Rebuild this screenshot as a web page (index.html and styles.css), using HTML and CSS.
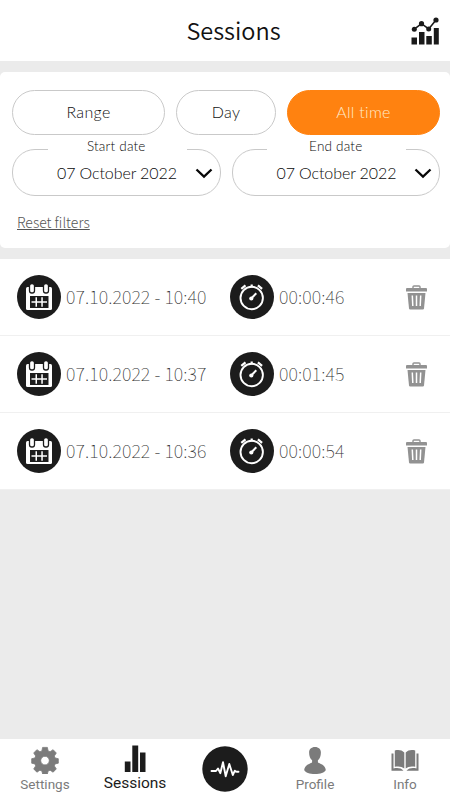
FILE: index.html
```html
<!DOCTYPE html>
<html lang="en">
<head>
<meta charset="utf-8">
<title>Sessions</title>
<link rel="stylesheet" href="styles.css">
</head>
<body>
<svg class="defs" aria-hidden="true">
  <symbol id="calendar" viewBox="0 0 44 44">
    <circle cx="22" cy="22" r="22" fill="#1c1c1c"/>
    <path d="M10.5 12h23a1.5 1.5 0 0 1 1.5 1.5v20a1.5 1.5 0 0 1-1.5 1.5h-23A1.5 1.5 0 0 1 9 33.500v-20a1.500 1.500 0 0 1 1.500-1.500z" fill="#fff"/>
    <path d="M13 21h18.500v12H13z" fill="#1c1c1c"/>
    <path d="M14.500 22.800h3.700v3.200h-3.700zM20.300 22.800H24V26h-3.700zM26.100 22.800h3.700V26h-3.700zM14.500 28h3.700v3.200h-3.700zM20.300 28H24v3.200h-3.700zM26.100 28h3.700v3.200h-3.700z" fill="#1c1c1c"/>
    <path d="M14.500 27H30M19.250 22.300v9.400M25.050 22.300v9.400" stroke="#fff" stroke-width="1.500"/>
    <rect x="12.500" y="8.500" width="5" height="9.500" rx="2.300" fill="#fff" stroke="#1c1c1c" stroke-width="1.300"/>
    <rect x="26.500" y="8.500" width="5" height="9.500" rx="2.300" fill="#fff" stroke="#1c1c1c" stroke-width="1.300"/>
  </symbol>
  <symbol id="timer" viewBox="0 0 44 44">
    <circle cx="22" cy="22" r="22" fill="#1c1c1c"/>
    <g fill="none" stroke="#fff">
      <circle cx="21.700" cy="23" r="11.200" stroke-width="1.900"/>
      <path d="M21.700 9.500v3M11.300 13.800l4.200-3.500M32.100 13.800l-4.200-3.500" stroke-width="2.200"/>
      <path d="M21.500 23.200l4.800-5" stroke-width="2"/>
    </g>
    <circle cx="21.300" cy="23.500" r="2.100" fill="#fff"/>
  </symbol>
  <symbol id="trash" viewBox="0 0 22 25">
    <path d="M7.500 3.500V1.800Q7.500 1 8.500 1h5q1 0 1 .8v1.700" fill="none" stroke="#929292" stroke-width="1.400"/>
    <path d="M1.500 3h19q1 0 1 1v2.500H.500V4q0-1 1-1z" fill="#929292"/>
    <path d="M2 8h18l-1.500 15.500q-.1 1-1.200 1H4.700q-1.100 0-1.200-1z" fill="#929292"/>
    <path d="M6.800 10.500l.5 10.500M11 10.500V21M15.200 10.500l-.5 10.500" stroke="#fff" stroke-width="1.500" fill="none"/>
  </symbol>
  <symbol id="chevron" viewBox="0 0 18 11">
    <path d="M1.500 1.500L9 8.700l7.500-7.200" fill="none" stroke="#080808" stroke-width="2.300"/>
  </symbol>
</svg>

<header class="header">
  <h1 class="title">Sessions</h1>
  <svg class="stats" viewBox="0 0 28 28">
    <g fill="#1a1a1a">
      <path d="M.5 20.500H6v7H.500zM8 15h5.500v12.500H8zM15.300 19h5.500v8.500h-5.500zM22.800 11h5v16.500h-5z"/>
      <circle cx="3.300" cy="12.200" r="2.500"/><circle cx="10.500" cy="6.700" r="2.600"/><circle cx="17.700" cy="12" r="2.500"/><circle cx="25" cy="3" r="2.600"/>
    </g>
    <path d="M3.300 12.200l7.200-5.500 7.200 5.300L25 3" fill="none" stroke="#1a1a1a" stroke-width="1.600"/>
  </svg>
</header>

<section class="filters">
  <div class="periods">
    <button class="pill range">Range</button>
    <button class="pill day">Day</button>
    <button class="pill all">All time</button>
  </div>
  <div class="dates">
    <fieldset class="date">
      <legend>Start date</legend>
      <span>07 October 2022</span>
      <svg class="chevron"><use href="#chevron"/></svg>
    </fieldset>
    <fieldset class="date">
      <legend>End date</legend>
      <span>07 October 2022</span>
      <svg class="chevron"><use href="#chevron"/></svg>
    </fieldset>
  </div>
  <a class="reset">Reset filters</a>
</section>

<main class="list">
  <div class="row">
    <svg class="disc"><use href="#calendar"/></svg><span class="when">07.10.2022 - 10:40</span>
    <svg class="disc"><use href="#timer"/></svg><span class="length">00:00:46</span>
    <svg class="trash"><use href="#trash"/></svg>
  </div>
  <div class="row">
    <svg class="disc"><use href="#calendar"/></svg><span class="when">07.10.2022 - 10:37</span>
    <svg class="disc"><use href="#timer"/></svg><span class="length">00:01:45</span>
    <svg class="trash"><use href="#trash"/></svg>
  </div>
  <div class="row">
    <svg class="disc"><use href="#calendar"/></svg><span class="when">07.10.2022 - 10:36</span>
    <svg class="disc"><use href="#timer"/></svg><span class="length">00:00:54</span>
    <svg class="trash"><use href="#trash"/></svg>
  </div>
</main>

<nav class="nav">
  <a class="tab">
    <svg class="icon" viewBox="0 0 28 28"><path fill="#7b7b7b" stroke="#7b7b7b" stroke-width=".8" stroke-linejoin="round" fill-rule="evenodd" d="M11.600 1.400h4.800l.7 3.500 2 .8 3-2 3.200 3.300-2 3 .8 2 3.200.7v4.500l-3.200.7-.8 2 2 3-3.200 3.300-3-2-2 .8-.7 3h-4.800l-.7-3-2-.8-3 2-3.200-3.300 2-3-.8-2L.7 17.200v-4.500l3.200-.7.8-2-2-3 3.200-3.300 3 2 2-.8zM14 10.300a4.300 4.300 0 1 0 0 8.600 4.300 4.300 0 0 0 0-8.600z"/></svg>
    <span>Settings</span>
  </a>
  <a class="tab active">
    <svg class="icon" viewBox="0 0 28 28"><path fill="#1c1c1c" d="M3.800 17.500h5.700V28H3.800zM11.300 1.500h5.900V28h-5.900zM19 8.500h5.500V28H19z"/></svg>
    <span>Sessions</span>
  </a>
  <a class="tab">
    <svg class="pulse" viewBox="0 0 46 46"><circle cx="23" cy="23" r="22.700" fill="#1c1c1c"/><path d="M9.500 25h4.500l2-2.500 2.300 4.700 2.700-11 2.700 14L27.300 18l3.500 11 2-4.300 1.700 1H36.500" fill="none" stroke="#fff" stroke-width="1.900" stroke-linejoin="round" stroke-linecap="round"/></svg>
  </a>
  <a class="tab">
    <svg class="icon" viewBox="0 0 28 28"><path fill="#7b7b7b" d="M14 1c3.700 0 5.900 2.300 5.900 5.500 0 3.800-1.200 6.300-3 7.700v2c1.300 1.600 7.500 2.100 7.900 7.800-1.300 2.700-5.300 4-10.800 4S4.500 26.700 3.200 24c.4-5.700 6.600-6.200 7.900-7.800v-2c-1.800-1.400-3-3.900-3-7.700C8.100 3.300 10.300 1 14 1z"/></svg>
    <span>Profile</span>
  </a>
  <a class="tab">
    <svg class="icon" viewBox="0 0 28 28"><g fill="#7b7b7b"><path d="M3.800 4.500c4-1 7.200-.3 9.500 2v16c-2.300-2-5.700-2.500-9.500-1.700zM24.200 4.500c-4-1-7.200-.3-9.500 2v16c2.300-2 5.700-2.500 9.500-1.700z"/><path d="M.5 7.500h2V22.500c4-.9 7.500-.5 10 2.200H.500zM27.500 7.500h-2V22.500c-4-.9-7.500-.5-10 2.200h12z"/></g></svg>
    <span>Info</span>
  </a>
</nav>
</body>
</html>
```
FILE: styles.css
```css
* { box-sizing: border-box; }
body {
  margin: 0;
  width: 450px;
  height: 800px;
  overflow: hidden;
  display: flex;
  flex-direction: column;
  background: #ebebeb;
  font-family: "Noto Sans", sans-serif;
}
.defs { position: absolute; width: 0; height: 0; }
.header {
  height: 61px;
  flex: none;
  background: #fff;
  display: grid;
  grid-template-columns: 1fr auto 1fr;
  align-items: center;
  padding: 0 11px;
}
.title {
  grid-column: 2;
  margin: -2px 0 0 17px;
  font: 350 23.500px/36px "Noto Sans CJK SC", sans-serif;
  color: #111;
}
.stats { width: 28px; height: 28px; justify-self: end; }
.filters {
  flex: none;
  height: 176px;
  margin-top: 11px;
  padding: 18px 10px 0 12px;
  background: #fff;
  border-radius: 5px;
}
.periods { display: flex; gap: 11px; }
.pill {
  height: 45px;
  padding: 0 0 2px;
  border: 1px solid #c9c9c9;
  border-radius: 23px;
  background: #fff;
  color: #111;
  font: 300 16px/20px Lato, sans-serif;
  letter-spacing: 0.3px;
}
.range { width: 153px; }
.day { width: 100px; }
.all { width: 153px; background: #ff8210; border-color: #ff8210; color: #ffebcb; }
.dates { display: flex; gap: 11px; margin-top: 3px; }
.date {
  position: relative;
  width: 209px;
  height: 58px;
  min-width: 0;
  margin: 0;
  padding: 0 16px 0 44px;
  border: 1px solid #c9c9c9;
  border-radius: 23px;
  color: #080808;
  font: 300 16px/23px Lato, sans-serif;
  letter-spacing: -0.1px;
}
.date span { white-space: nowrap; }
.date legend {
  width: 139px;
  height: 23px;
  margin-left: -13px;
  padding: 0 2px 0 0;
  text-align: center;
  font-size: 13.500px;
  line-height: 17px;
  letter-spacing: 0.2px;
}
.chevron { position: absolute; right: 7px; top: 7px; width: 18px; height: 11px; }
.reset {
  display: inline-block;
  margin: 16px 0 0 5px;
  font: 300 14px/20px "Noto Sans CJK SC", sans-serif;
  text-decoration: underline;
  color: #555;
}
.list { flex: none; margin-top: 11px; }
.row {
  height: 77px;
  display: flex;
  align-items: center;
  padding: 0 22px 0 17px;
  background: #fff;
  border-bottom: 1px solid #f0f0f0;
  font: 100 18px/26px "Noto Sans CJK SC", sans-serif;
  letter-spacing: 0.1px;
  color: #333;
}
.row span { white-space: nowrap; margin-top: -2px; }
.disc { width: 44px; height: 44px; flex: none; }
.when { width: 169px; padding-left: 5px; }
.length { padding-left: 5px; }
.trash { width: 23px; height: 25px; margin-left: auto; }
.nav {
  height: 61px;
  margin-top: auto;
  flex: none;
  display: flex;
  background: #fff;
}
.tab {
  width: 90px;
  padding-top: 8px;
  display: flex;
  flex-direction: column;
  align-items: center;
  color: #7b7b7b;
  font: 400 13.500px/19px Roboto, sans-serif;
}
.icon { width: 28px; height: 28px; margin-top: -1px; margin-bottom: 1px; }
.active { padding-top: 6px; color: #1c1c1c; font-size: 15.500px; line-height: 21px; }
.pulse { width: 46px; height: 46px; margin-top: -1px; }
```
